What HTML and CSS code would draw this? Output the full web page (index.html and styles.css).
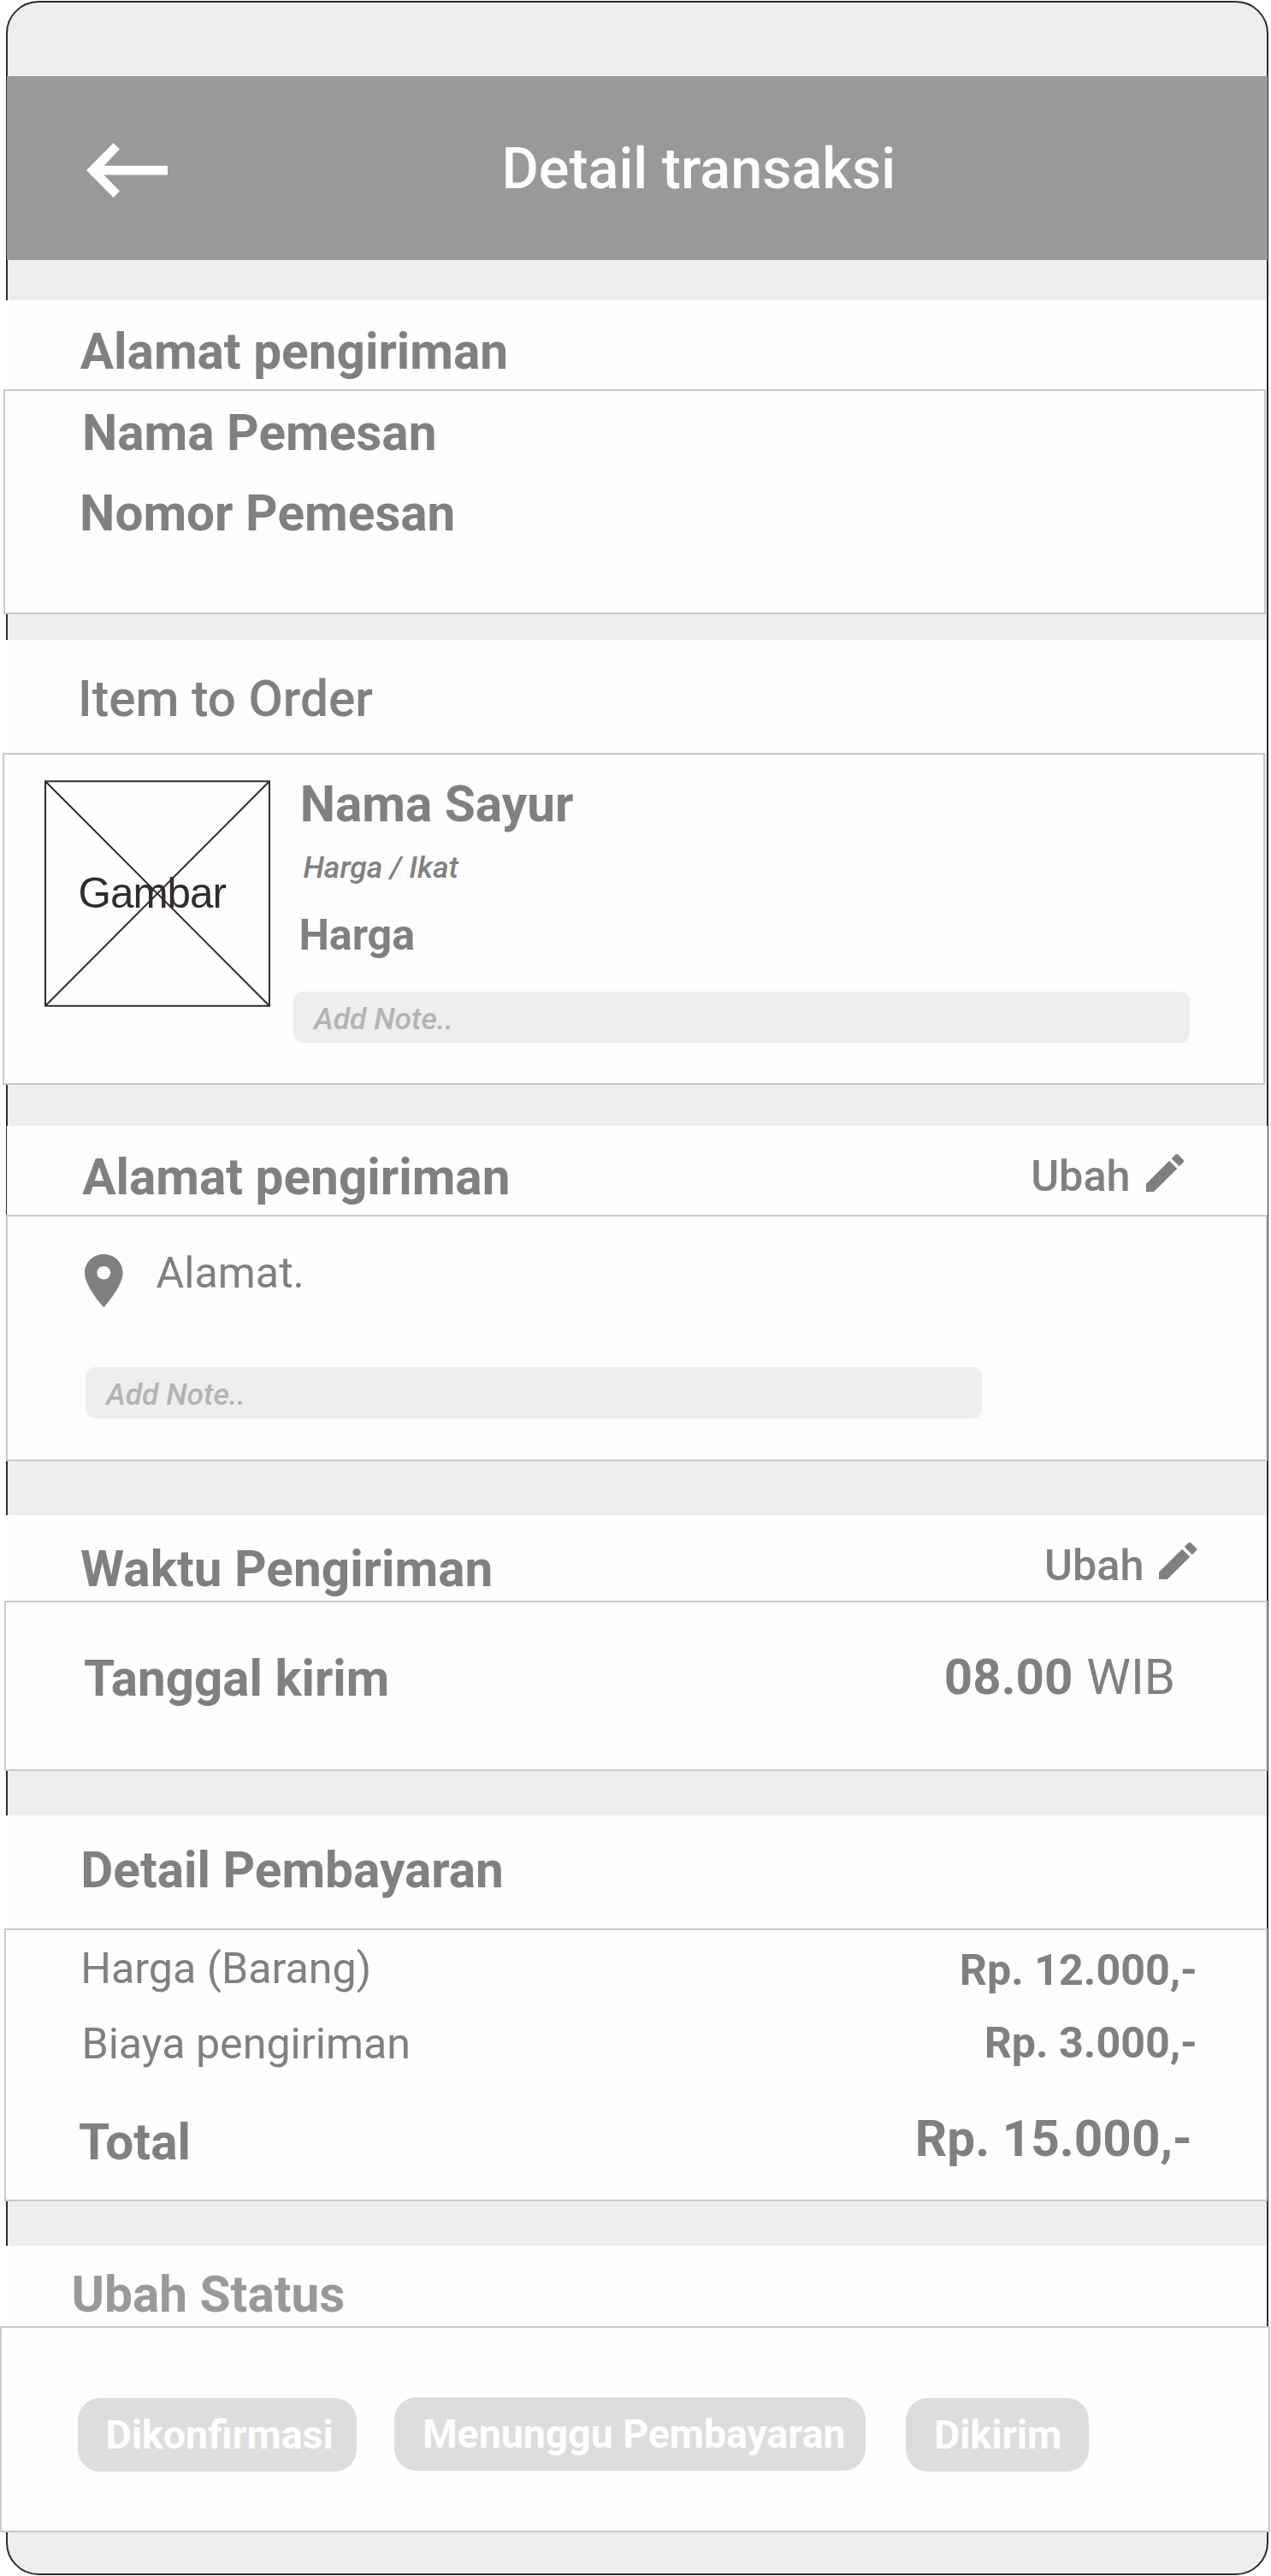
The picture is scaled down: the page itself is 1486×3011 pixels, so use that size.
FILE: index.html
```html
<!DOCTYPE html>
<html lang="id">
<head>
<meta charset="utf-8">
<title>Detail transaksi</title>
<link rel="stylesheet" href="styles.css">
</head>
<body>
<main class="phone">
  <header class="appbar">
    <svg class="back" viewBox="0 0 95 64" aria-hidden="true"><path d="M0 32 31.7 0 38.9 7.5 20.5 26.7H95v10.8H20.5L38.9 56.3 31.7 64Z"/></svg>
    <h1 class="appbar-title">Detail transaksi</h1>
  </header>

  <section class="block customer">
    <div class="block-head"><h2>Alamat pengiriman</h2></div>
    <div class="block-body">
      <p class="strong">Nama Pemesan</p>
      <p class="strong customer-number">Nomor Pemesan</p>
    </div>
  </section>

  <section class="block items">
    <div class="block-head"><h2>Item to Order</h2></div>
    <div class="block-body">
      <div class="thumb">
        <span class="thumb-label">Gambar</span>
        <svg class="thumb-lines" viewBox="0 0 264 265" aria-hidden="true"><path d="M1 1.2H263V263.7H1ZM1 1.2 263 263.7M263 1.2 1 263.7"/></svg>
      </div>
      <div class="item-info">
        <p class="strong item-name">Nama Sayur</p>
        <p class="item-unit">Harga / Ikat</p>
        <p class="item-price">Harga</p>
        <div class="note">Add Note..</div>
      </div>
    </div>
  </section>

  <section class="block address">
    <div class="block-head">
      <h2>Alamat pengiriman</h2>
      <div class="edit">
        <span>Ubah</span>
        <svg class="pencil" viewBox="3 3 18 18" aria-hidden="true"><path d="M3 17.25V21h3.75L17.81 9.94l-3.75-3.75L3 17.25zM20.71 7.04a1 1 0 0 0 0-1.41l-2.34-2.34a1 1 0 0 0-1.41 0l-1.83 1.83 3.75 3.75 1.83-1.83z"/></svg>
      </div>
    </div>
    <div class="block-body">
      <div class="place">
        <svg class="pin" viewBox="5 2 14 20" preserveAspectRatio="none" aria-hidden="true"><path d="M12 2C8.13 2 5 5.13 5 9c0 5.25 7 13 7 13s7-7.75 7-13c0-3.87-3.13-7-7-7zm0 9.5a2.5 2.5 0 0 1 0-5 2.5 2.5 0 0 1 0 5z"/></svg>
        <span>Alamat.</span>
      </div>
      <div class="note">Add Note..</div>
    </div>
  </section>

  <section class="block schedule">
    <div class="block-head">
      <h2>Waktu Pengiriman</h2>
      <div class="edit">
        <span>Ubah</span>
        <svg class="pencil" viewBox="3 3 18 18" preserveAspectRatio="none" aria-hidden="true"><path d="M3 17.25V21h3.75L17.81 9.94l-3.75-3.75L3 17.25zM20.71 7.04a1 1 0 0 0 0-1.41l-2.34-2.34a1 1 0 0 0-1.41 0l-1.83 1.83 3.75 3.75 1.83-1.83z"/></svg>
      </div>
    </div>
    <div class="block-body">
      <p class="strong">Tanggal kirim</p>
      <p class="time"><b>08.00</b><span>WIB</span></p>
    </div>
  </section>

  <section class="block payment">
    <div class="block-head"><h2>Detail Pembayaran</h2></div>
    <div class="block-body">
      <div class="row row-goods"><span>Harga (Barang)</span><b>Rp. 12.000,-</b></div>
      <div class="row row-delivery"><span>Biaya pengiriman</span><b>Rp. 3.000,-</b></div>
      <div class="row row-total"><span>Total</span><b>Rp. 15.000,-</b></div>
    </div>
  </section>

  <section class="block status">
    <div class="block-head"><h2>Ubah Status</h2></div>
    <div class="block-body">
      <button class="chip chip-confirmed">Dikonfirmasi</button>
      <button class="chip chip-waiting">Menunggu Pembayaran</button>
      <button class="chip chip-sent">Dikirim</button>
    </div>
  </section>
</main>
</body>
</html>
```
FILE: styles.css
```css
* { box-sizing: border-box; margin: 0; padding: 0; }

html { background: #fff; }

body {
  padding: 1px 3px 1px 7px;
  font-family: Roboto, "Liberation Sans", sans-serif;
  color: #808080;
}

.phone {
  width: 1476px;
  height: 3009px;
  padding-top: 86px;
  background: #eee;
  border: 2px solid #322c2c;
  border-radius: 38px;
}

h1, h2, p, span, b { white-space: nowrap; }
b { font-weight: 700; }
svg { display: block; flex: none; }

/* App bar */
.appbar {
  display: flex;
  align-items: flex-start;
  height: 215px;
  margin: 0 -1px;
  padding: 68px 0 0 93.4px;
  background: #999;
  color: #fefefe;
}
.back { width: 95px; height: 64px; margin-top: 10px; fill: #fefefe; }
.appbar-title {
  margin-left: 390px;
  font-size: 66.5px;
  line-height: 80px;
  font-weight: 500;
}

/* Blocks: a white heading strip over an outlined panel */
.block-head { display: flex; justify-content: space-between; align-items: flex-start; background: #fefefe; }
.block-body { background: #fefefe; border: 2px solid #c9caca; }
h2, .strong { font-size: 58.5px; line-height: 60px; font-weight: 700; }

.edit { display: flex; align-items: flex-start; font-size: 50.4px; line-height: 60px; font-weight: 500; }
.pencil { width: 44px; height: 44px; fill: #808080; }

.note {
  width: 1048px;
  height: 60px;
  padding: 2px 0 0 24px;
  background: #eee;
  border-radius: 11px;
  color: #b3b3b3;
  font-size: 35.4px;
  line-height: 60px;
  font-style: italic;
  font-weight: 500;
}

.customer { margin-top: 47px; }
.customer .block-head { height: 104px; margin: 0 0 0 -3px; padding: 30px 0 0 87.8px; }
.customer .block-body { height: 263px; margin: 0 1px 0 -5px; padding: 19px 0 0 90px; }
.customer-number { margin: 34px 0 0 -2.9px; }

.items { margin-top: 30px; }
.items .block-head { height: 132px; margin-left: -5px; padding: 39px 0 0 87.1px; }
.items h2 { font-weight: 500; }
.items .block-body {
  display: flex;
  align-items: flex-start;
  gap: 27px;
  height: 388px;
  margin: 0 2px 0 -6px;
  padding: 28px 0 0 47px;
}
.thumb { position: relative; flex: none; width: 264px; height: 265px; margin-top: 2px; padding: 102px 0 0 39.6px; }
.thumb-label {
  display: block;
  font: 49.4px/60px "Liberation Sans", Arial, sans-serif;
  letter-spacing: -1px;
  color: #322c2c;
}
.thumb-lines { position: absolute; inset: 0; width: 264px; height: 265px; fill: none; stroke: #322c2c; stroke-width: 2; }
.item-name { margin-left: 7.7px; }
.item-unit { margin: 24px 0 0 11.4px; font-size: 35.5px; line-height: 40px; font-style: italic; font-weight: 500; }
.item-price { margin: 29px 0 36px 6.4px; font-size: 50.2px; line-height: 60px; font-weight: 700; }

.address { margin-top: 48px; }
.address .block-head { height: 104px; margin: 0 -1px; padding: 30px 98px 0 88.2px; }
.address .edit { gap: 18.4px; margin-top: -1px; }
.address .pencil { margin-top: 4px; }
.address .block-body { height: 288px; margin: 0 -1px 0 -2px; padding: 36px 0 0 90px; }
.place { display: flex; align-items: flex-start; gap: 39px; height: 70px; font-size: 50.2px; line-height: 60px; }
.pin { width: 44.6px; height: 62px; margin-top: 8px; fill: #808080; }
.address .note { margin: 70px 0 0 1px; }

.schedule { margin-top: 63px; }
.schedule .block-head { height: 100px; margin: 0 0 0 -3px; padding: 33px 82.5px 0 88.1px; }
.schedule .edit { gap: 17px; margin-top: -4px; }
.schedule .pencil { margin-top: 2.5px; height: 43.5px; }
.schedule .block-body {
  display: flex;
  justify-content: space-between;
  align-items: flex-start;
  height: 199px;
  margin: 0 -1px 0 -4px;
  padding: 59px 106px 0 91px;
}
.schedule .strong { font-size: 58.3px; }
.time { display: flex; gap: 16px; margin-top: -2px; font-size: 58.2px; line-height: 60px; }

.payment { margin-top: 52px; }
.payment .block-head { height: 132px; margin-left: -3px; padding: 34px 0 0 88.3px; }
.payment .block-body { height: 319px; margin: 0 -1px 0 -4px; padding-top: 15px; }
.row { display: flex; justify-content: space-between; align-items: flex-start; height: 60px; font-size: 50.2px; line-height: 60px; }
.row-goods { padding: 0 80.1px 0 87.2px; }
.row-goods b { margin-top: 2px; }
.row-delivery { margin-top: 28px; padding: 0 80.1px 0 88.4px; }
.row-delivery b { margin-top: -1px; }
.row-total { margin-top: 55px; padding: 0 86.1px 0 85px; font-size: 58.5px; font-weight: 700; }
.row-total b { margin-top: -4px; }

.status { margin-top: 52px; }
.status .block-head { height: 94px; margin-left: -2px; padding: 27px 0 0 76.5px; color: #999; }
.status .block-body {
  display: flex;
  align-items: flex-start;
  height: 241px;
  margin: 0 -4px 0 -9px;
  padding: 82px 0 0 88.5px;
}
.chip {
  height: 86px;
  padding-top: 1px;
  border: 0;
  border-radius: 26px;
  background: #dcdedd;
  color: #fefefe;
  font: 700 46.5px/85px Roboto, sans-serif;
  text-align: left;
  white-space: nowrap;
}
.chip-confirmed { width: 326.5px; padding-left: 33px; }
.chip-waiting { width: 551.4px; margin: -1px 0 0 43.6px; padding-left: 33.4px; font-size: 46.4px; }
.chip-sent { width: 213.7px; margin-left: 47px; padding-left: 33px; }
```
